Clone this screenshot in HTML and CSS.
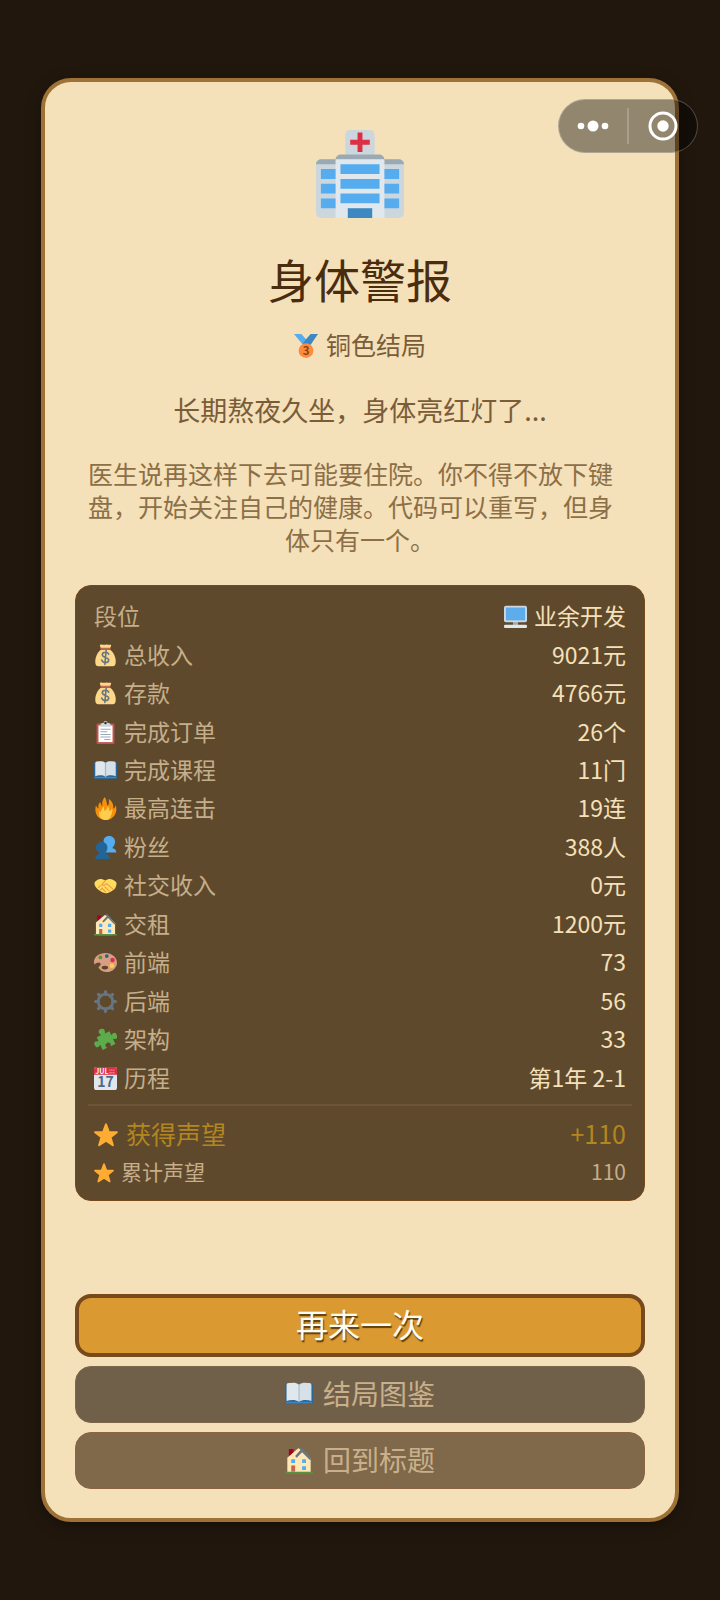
FILE: index.html
```html
<!DOCTYPE html>
<html lang="zh-CN">
  <head>
    <meta charset="UTF-8" />
    <meta name="viewport" content="width=device-width, initial-scale=1.0" />
    <title>身体警报</title>
    <link rel="stylesheet" href="styles.css">
  </head>
  <body>
    <!-- Shared icons -->
    <svg class="sprite" aria-hidden="true">
      <symbol id="i-bag" viewBox="0 0 36 36">
        <path fill="#FDD888" d="M11 9C6 12 2 20 2 27c0 5 1 8 5 8h22c4 0 5-3 5-8 0-7-4-15-9-18z"/>
        <path fill="#FDD888" d="M10 1c3-1 5 1 8 0s5 1 8 0c2 0 0 4-2 7H12C10 5 8 1 10 1z"/>
        <rect x="10" y="6" width="16" height="3" rx="1.500" fill="#BF6952"/>
        <path d="M23 16c-1-2-3-3-5-3-3 0-5 1.500-5 4 0 5 10 3 10 8 0 3-2 4-5 4s-5-1-6-4M19 10l-2 22" fill="none" stroke="#67757F" stroke-width="2.500" stroke-linecap="round"/>
      </symbol>
      <symbol id="i-clipboard" viewBox="0 0 36 36">
        <rect x="4" y="4" width="28" height="32" rx="2" fill="#C1544F"/>
        <path fill="#fff" d="M7 7h22v26H7z"/>
        <path fill="#CCD6DD" d="M10 9V6c0-2 2-3 4-3h1c0-4 6-4 6 0h1c2 0 4 1 4 3v3z"/>
        <circle cx="18" cy="3" r="2" fill="#292F33"/>
        <path stroke="#99AAB5" stroke-width="1.600" d="M10 13h16M10 17h11M10 21h16M10 25h16M16 29h10"/>
      </symbol>
      <symbol id="i-book" viewBox="0 0 36 36">
        <path fill="#2A6797" d="M0 7c0-1 1-2 2-2h32c1 0 2 1 2 2v22c0 1-1 2-2 2H20l-2 1-2-1H2c-1 0-2-1-2-2z"/>
        <path fill="#3B88C3" d="M1 28h34v2H1z"/>
        <path fill="#E1E8ED" d="M18 6C15 3 9 3 5 4 3 4 2 5 2 7v20c5-2 12-2 16 1z"/>
        <path fill="#D6E0E8" d="M18 6c3-3 9-3 13-2 2 0 3 1 3 3v20c-5-2-12-2-16 1z"/>
        <path fill="#99AAB5" d="M17 6h2v22h-2z" opacity=".5"/>
      </symbol>
      <symbol id="i-fire" viewBox="0 0 36 36">
        <path fill="#F4900C" d="M35 19c0-2-.3-4-.9-6-1 3-2 5-4 5 1-6-2-12-7-15 1 6 0 9-2 11-1-3-1-8-4-14-4 4-5 9-4 14-2-1-3-4-3-6-3 3-4 5-3 10-2-1-3-2-4-5-3 10 1 23 15 23 10 0 17-8 17-17z"/>
        <path fill="#FFCC4D" d="M28 25c1-3 1-5 0-7-1 3-3 4-4 4 0-3-1-6-3-8 0 4-2 6-4 8-1-2-2-5-1-8-3 3-5 6-5 10-1-1-2-2-2-3-4 8 3 15 9 15 5 0 8-3 10-11z"/>
      </symbol>
      <symbol id="i-fans" viewBox="0 0 36 36">
        <path fill="#55ACEE" d="M24 0c5 0 9 4 9 9 0 4-2 7-4 9v1c4 1 6 3 6 7H16c-3-3-2-6 2-8-2-2-3-6-3-10 0-5 4-8 9-8z"/>
        <path fill="#269" d="M12 9c5 0 9 4 9 9 0 3-1 6-3 8v2c4 1 7 3 7 8H2c0-5 3-7 6-8v-2c-3-2-5-5-5-8 0-5 4-9 9-9z"/>
      </symbol>
      <symbol id="i-hands" viewBox="0 0 36 36">
        <path fill="#FFDC5D" d="M1 13c3-4 7-6 11-5l6 2c5-3 10-4 17 3 1 4-1 8-3 11-4 3-9 7-14 6-6-1-9-4-13-7-3-3-5-6-4-10z"/>
        <path fill="none" stroke="#EF9645" stroke-width="1.600" stroke-linecap="round" d="M18 10l-6 7c3 2 5 0 8-2l10 9M17 20l7 7M13 23l5 5M7 21l3-3M10 25l3-3"/>
      </symbol>
      <symbol id="i-house" viewBox="0 0 36 36">
        <path fill="#5C913B" d="M0 33h36v2c0 1-36 1-36 0z"/>
        <path fill="#A0041E" d="M5 4h6v10H5z"/>
        <path fill="#FFE8B6" d="M3 15L17 3l6 2 10 11v17H3z"/>
        <path fill="#66757F" d="M20 1l14 16-2 1L22 8l-7 7-2-2 7-8-2-2z"/>
        <path fill="#C1694F" d="M8 25h5v8H8z"/>
        <path fill="#55ACEE" d="M8 17h5v5H8zM22 17h5v5h-5zM22 26h5v5h-5z"/>
      </symbol>
      <symbol id="i-palette" viewBox="0 0 36 36">
        <path fill="#D99E82" d="M18 3C8 3 0 9 0 17c0 2 0 3 1 4 3-3 7-4 9-2 2 3-2 4-3 7 2 4 7 7 13 7 9 0 16-7 16-15S28 3 18 3z"/>
        <ellipse cx="17" cy="26" rx="5" ry="3" fill="#5F4326"/>
        <circle cx="10" cy="10" r="3" fill="#5C913B"/>
        <circle cx="20" cy="8" r="3" fill="#269"/>
        <circle cx="29" cy="14" r="3.500" fill="#DD2E44"/>
        <circle cx="28" cy="23" r="3.500" fill="#FFCC4D"/>
      </symbol>
      <symbol id="i-gear" viewBox="0 0 36 36">
        <circle cx="18" cy="18" r="11.500" fill="none" stroke="#66757F" stroke-width="4.500"/>
        <g stroke="#66757F" stroke-width="5" stroke-linecap="round">
          <path d="M18 2.500v4M18 29.500v4M2.500 18h4M29.500 18h4"/>
          <path d="M7 7l3 3M26 26l3 3M7 29l3-3M26 10l3-3"/>
        </g>
      </symbol>
      <symbol id="i-puzzle" viewBox="0 0 36 36">
        <g transform="rotate(-25 18 18)">
          <path fill="#5DAC4C" d="M7 9h8c-4-6-1-9 3-9s7 3 3 9h8v7c6-4 8-1 8 3s-2 7-8 3v9h-8c3-5 0-7-3-7s-6 2-3 7H7v-9c-6 4-8 1-8-3s2-7 8-3z"/>
        </g>
      </symbol>
      <symbol id="i-calendar" viewBox="0 0 36 36">
        <rect width="36" height="36" rx="4" fill="#E0E7EC"/>
        <path fill="#DD2F45" d="M0 12V4c0-2 2-4 4-4h28c2 0 4 2 4 4v8z"/>
        <text x="2" y="11" font-size="11" font-weight="700" fill="#F5F8FA">JUL</text>
        <path stroke="#F28A96" stroke-width="2" stroke-dasharray="2 1" d="M24 5h9M24 9h9"/>
        <text x="18" y="32" font-size="22" font-weight="700" text-anchor="middle" fill="#50688A">17</text>
      </symbol>
      <symbol id="i-star" viewBox="0 0 36 36">
        <path fill="#FFAC33" stroke="#FFAC33" stroke-width="3" stroke-linejoin="round" d="M18 2l4.300 11.500 12 .3-9.500 7.500 3.500 12L18 26.500 7.700 33.300l3.500-12-9.500-7.500 12-.3z"/>
      </symbol>
      <symbol id="i-desktop" viewBox="0 0 36 36">
        <path fill="#9AAAB4" d="M14 24h8v8h-8z"/>
        <rect width="36" height="26" y="1" rx="3" fill="#CCD6DD"/>
        <path fill="#5DADEC" d="M3 4h30v20H3z"/>
        <rect y="31" width="36" height="5" rx="2" fill="#E1E8ED"/>
      </symbol>
    </svg>

    <main class="page">
      <section class="card">
        <svg class="hero-icon" viewBox="0 0 36 36" role="img" aria-label="医院">
          <rect x="12" width="12" height="14" rx="2" fill="#CCD6DD"/>
          <path fill="#DD2E44" d="M17 1h2v3h3v2h-3v3h-2V6h-3V4h3z"/>
          <rect y="12" width="36" height="24" rx="2" fill="#CCD6DD"/>
          <path fill="#9AAAB4" d="M0 14c0-1 1-2 2-2h32c1 0 2 1 2 2zM8 12c0-1 1-2 2-2h16c1 0 2 1 2 2z"/>
          <path fill="#E1E8ED" d="M8 12h20v24H8z"/>
          <path fill="#55ACEE" d="M10 14h16v4H10zM10 20h16v4H10zM10 26h16v4H10zM2 16h6v4H2zM2 22h6v4H2zM2 28h6v4H2zM28 16h6v4h-6zM28 22h6v4h-6zM28 28h6v4h-6z"/>
          <path fill="#3B88C3" d="M13 32h10v4H13z"/>
        </svg>
        <h1 class="title">身体警报</h1>
        <p class="rank">
          <svg class="icon icon-lg" viewBox="0 0 36 36" aria-hidden="true">
            <path fill="#55ACEE" d="M18 8l-7-8H0l14 17 11-5z"/>
            <path fill="#3B88C3" d="M25 0l-7 8-5 7 12 1L36 0z"/>
            <circle cx="18" cy="25" r="11" fill="#FF8A3B"/>
            <text x="18" y="31" font-size="17" font-weight="700" text-anchor="middle" fill="#7C4419">3</text>
          </svg>
          铜色结局
        </p>
        <p class="tagline">长期熬夜久坐，身体亮红灯了...</p>
        <p class="story">医生说再这样下去可能要住院。你不得不放下键盘，开始关注自己的健康。代码可以重写，但身体只有一个。</p>

        <div class="panel">
          <table class="stats">
            <tr>
              <th scope="row">段位</th>
              <td><span class="cell"><svg class="icon"><use href="#i-desktop"/></svg>业余开发</span></td>
            </tr>
            <tr>
              <th scope="row"><span class="cell"><svg class="icon"><use href="#i-bag"/></svg>总收入</span></th>
              <td>9021元</td>
            </tr>
            <tr>
              <th scope="row"><span class="cell"><svg class="icon"><use href="#i-bag"/></svg>存款</span></th>
              <td>4766元</td>
            </tr>
            <tr>
              <th scope="row"><span class="cell"><svg class="icon"><use href="#i-clipboard"/></svg>完成订单</span></th>
              <td>26个</td>
            </tr>
            <tr>
              <th scope="row"><span class="cell"><svg class="icon"><use href="#i-book"/></svg>完成课程</span></th>
              <td>11门</td>
            </tr>
            <tr>
              <th scope="row"><span class="cell"><svg class="icon"><use href="#i-fire"/></svg>最高连击</span></th>
              <td>19连</td>
            </tr>
            <tr>
              <th scope="row"><span class="cell"><svg class="icon"><use href="#i-fans"/></svg>粉丝</span></th>
              <td>388人</td>
            </tr>
            <tr>
              <th scope="row"><span class="cell"><svg class="icon"><use href="#i-hands"/></svg>社交收入</span></th>
              <td>0元</td>
            </tr>
            <tr>
              <th scope="row"><span class="cell"><svg class="icon"><use href="#i-house"/></svg>交租</span></th>
              <td>1200元</td>
            </tr>
            <tr>
              <th scope="row"><span class="cell"><svg class="icon"><use href="#i-palette"/></svg>前端</span></th>
              <td>73</td>
            </tr>
            <tr>
              <th scope="row"><span class="cell"><svg class="icon"><use href="#i-gear"/></svg>后端</span></th>
              <td>56</td>
            </tr>
            <tr>
              <th scope="row"><span class="cell"><svg class="icon"><use href="#i-puzzle"/></svg>架构</span></th>
              <td>33</td>
            </tr>
            <tr>
              <th scope="row"><span class="cell"><svg class="icon"><use href="#i-calendar"/></svg>历程</span></th>
              <td>第1年 2-1</td>
            </tr>
          </table>
          <table class="fame">
            <tr class="fame-gain">
              <th scope="row"><span class="cell"><svg class="icon icon-lg"><use href="#i-star"/></svg>获得声望</span></th>
              <td>+110</td>
            </tr>
            <tr class="fame-total">
              <th scope="row"><span class="cell"><svg class="icon icon-sm"><use href="#i-star"/></svg>累计声望</span></th>
              <td>110</td>
            </tr>
          </table>
        </div>

        <div class="actions">
          <button type="button" class="btn btn-primary">再来一次</button>
          <button type="button" class="btn btn-gallery"><svg class="icon icon-btn"><use href="#i-book"/></svg>结局图鉴</button>
          <button type="button" class="btn btn-home"><svg class="icon icon-btn"><use href="#i-house"/></svg>回到标题</button>
        </div>
      </section>
    </main>

    <!-- Floating menu capsule -->
    <div class="capsule">
      <button type="button" class="capsule-btn" aria-label="更多">
        <svg width="32" height="12" viewBox="0 0 32 12" fill="#fff">
          <circle cx="4" cy="6" r="3.300"/>
          <circle cx="16" cy="6" r="5.500"/>
          <circle cx="28" cy="6" r="3.300"/>
        </svg>
      </button>
      <button type="button" class="capsule-btn" aria-label="关闭">
        <svg width="30" height="30" viewBox="0 0 30 30" fill="#fff">
          <circle cx="15" cy="15" r="13" fill="none" stroke="#fff" stroke-width="3"/>
          <circle cx="15" cy="15" r="5.700"/>
        </svg>
      </button>
    </div>
  </body>
</html>
```

FILE: styles.css
```css
* {
  box-sizing: border-box;
}
body {
  margin: 0;
  background-color: #21170d;
  color: #7b5c38;
  font-family: "Noto Sans CJK SC", sans-serif;
}
h1,
p {
  margin: 0;
}
.sprite {
  display: none;
}
.page {
  display: flex;
  min-height: 100vh;
  padding: 78px 41px;
}
.card {
  flex: 1;
  display: flex;
  flex-direction: column;
  align-items: center;
  padding: 48px 30px 29px;
  border: 4px solid #9e7136;
  border-radius: 30px;
  background-color: #f4e0b9;
  box-shadow: 0 4px 16px rgba(0, 0, 0, 0.3);
}

/* Heading */
.hero-icon {
  width: 88px;
  height: 88px;
}
.title {
  margin-top: 30px;
  color: #4a2c0e;
  font-size: 46px;
  font-weight: 400;
  line-height: 60px;
}
.rank {
  display: flex;
  align-items: center;
  gap: 8px;
  margin-top: 20px;
  font-size: 25px;
  line-height: 32px;
}
.tagline {
  margin-top: 32px;
  font-size: 27px;
  line-height: 36px;
}
.story {
  width: 100%;
  margin: 29px 0;
  padding: 0 13px;
  color: #8c6f47;
  font-size: 25px;
  line-height: 33px;
  text-align: left;
  text-align-last: center;
}
.icon {
  flex: none;
  width: 23px;
  height: 23px;
  margin-top: 3px;
}
.icon-sm {
  width: 20px;
  height: 20px;
}
.icon-lg {
  width: 24px;
  height: 24px;
}
.icon-btn {
  width: 28px;
  height: 28px;
}

/* Stats panel */
.panel {
  width: 100%;
  padding: 10px 12px;
  border: 1px solid #76481c;
  border-radius: 16px;
  background-color: #5f492c;
}
table {
  width: 100%;
  border-collapse: collapse;
  font-size: 23px;
  line-height: 30px;
}
.stats {
  height: 500px;
}
th,
td {
  padding: 0 6px;
  vertical-align: middle;
}
th {
  color: #c5ae8a;
  font-weight: 400;
  text-align: left;
}
td {
  color: #f4e0b9;
  text-align: right;
}
.cell {
  display: inline-flex;
  align-items: center;
  gap: 7px;
  vertical-align: top;
}
.fame {
  margin-top: 8px;
  border-top: 2px solid #6d5434;
  border-collapse: separate;
  border-spacing: 0;
  padding-top: 8px;
}
.fame th,
.fame td {
  height: 38px;
}
.fame-gain th,
.fame-gain td {
  color: #b4861f;
  font-size: 25px;
}
.fame-gain .cell {
  gap: 8px;
}
.fame-total th,
.fame-total td {
  color: #c5ae8a;
  font-size: 21px;
}

/* Buttons */
.actions {
  display: flex;
  flex-direction: column;
  gap: 9px;
  width: 100%;
  margin-top: auto;
  padding-top: 32px;
}
.btn {
  display: flex;
  align-items: center;
  justify-content: center;
  gap: 10px;
  width: 100%;
  padding: 0 0 4px;
  border-radius: 16px;
  color: #c9b08a;
  font-family: inherit;
  font-size: 28px;
  line-height: 36px;
  cursor: pointer;
}
.btn-primary {
  height: 63px;
  padding-bottom: 6px;
  border: 4px solid #774a1c;
  background-color: #db9a31;
  color: #fffbee;
  font-size: 32px;
  text-shadow: 1px 2px 1px rgba(60, 40, 10, 0.8);
}
.btn-gallery {
  height: 57px;
  border: 1px solid #7d6749;
  background-color: #70604a;
}
.btn-home {
  height: 57px;
  border: 1px solid #8c6540;
  background-color: #80684a;
}

.capsule {
  position: absolute;
  top: 99px;
  right: 22px;
  display: flex;
  align-items: center;
  width: 140px;
  height: 54px;
  border: 1px solid rgba(255, 255, 255, 0.25);
  border-radius: 27px;
  background-color: rgba(0, 0, 0, 0.4);
}
.capsule-btn {
  flex: 1;
  display: flex;
  align-items: center;
  justify-content: center;
  height: 36px;
  padding: 0;
  border: none;
  background: none;
  cursor: pointer;
}
.capsule-btn + .capsule-btn {
  border-left: 2px solid rgba(255, 255, 255, 0.2);
}
```
